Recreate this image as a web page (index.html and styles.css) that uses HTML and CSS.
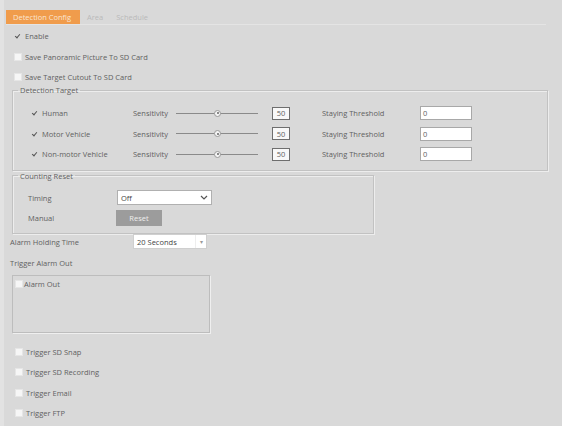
FILE: index.html
```html
<!DOCTYPE html>
<html>
<head>
<meta charset="utf-8">
<link rel="stylesheet" href="styles.css">
</head>
<body>
<div class="page">
  <div class="tabs">
    <span class="tab active">Detection Config</span>
    <span class="tab">Area</span>
    <span class="tab">Schedule</span>
  </div>

  <div class="toprows">
    <div class="row top"><span class="cb checked"></span><span>Enable</span></div>
    <div class="row top"><span class="cb"></span><span>Save Panoramic Picture To SD Card</span></div>
    <div class="row top"><span class="cb"></span><span>Save Target Cutout To SD Card</span></div>
  </div>

  <fieldset class="group target">
    <legend>Detection Target</legend>
    <div class="trow">
      <div class="tname"><span class="cb checked"></span><span>Human</span></div>
      <span class="slabel">Sensitivity</span>
      <span class="slider"><span class="thumb"></span></span>
      <span class="num">50</span>
      <span class="stlabel">Staying Threshold</span>
      <span class="tinput">0</span>
    </div>
    <div class="trow">
      <div class="tname"><span class="cb checked"></span><span>Motor Vehicle</span></div>
      <span class="slabel">Sensitivity</span>
      <span class="slider"><span class="thumb"></span></span>
      <span class="num">50</span>
      <span class="stlabel">Staying Threshold</span>
      <span class="tinput">0</span>
    </div>
    <div class="trow">
      <div class="tname"><span class="cb checked"></span><span>Non-motor Vehicle</span></div>
      <span class="slabel">Sensitivity</span>
      <span class="slider"><span class="thumb"></span></span>
      <span class="num">50</span>
      <span class="stlabel">Staying Threshold</span>
      <span class="tinput">0</span>
    </div>
  </fieldset>

  <fieldset class="group reset">
    <legend>Counting Reset</legend>
    <div class="crow">
      <span class="clabel">Timing</span>
      <span class="select">Off<svg class="chev" width="8" height="5" viewBox="0 0 8 5"><path d="M1 1 L4 4 L7 1" fill="none" stroke="#555" stroke-width="1.2"/></svg></span>
    </div>
    <div class="crow">
      <span class="clabel">Manual</span>
      <span class="btn">Reset</span>
    </div>
  </fieldset>

  <div class="row hold">
    <span class="hlabel">Alarm Holding Time</span>
    <span class="select2"><span class="sval">20 Seconds</span><span class="sarrow">&#9662;</span></span>
  </div>
  <div class="row plain">Trigger Alarm Out</div>
  <div class="alarmbox">
    <div class="arow"><span class="cb"></span><span>Alarm Out</span></div>
  </div>

  <div class="triggers">
    <div class="row trig"><span class="cb"></span><span>Trigger SD Snap</span></div>
    <div class="row trig"><span class="cb"></span><span>Trigger SD Recording</span></div>
    <div class="row trig"><span class="cb"></span><span>Trigger Email</span></div>
    <div class="row trig"><span class="cb"></span><span>Trigger FTP</span></div>
  </div>
</div>
</body>
</html>
```

FILE: styles.css
```css
html, body {
  margin: 0;
  padding: 0;
  background: #d9d9d9;
}
body {
  font-family: "Open Sans", "Noto Sans", sans-serif;
  font-size: 7.5px;
  color: #616161;
  width: 562px;
  height: 426px;
  overflow: hidden;
}
.page {
  padding: 10px 0 0 0;
  border-left: 4px solid #e2e2e2;
  min-height: 426px;
  box-sizing: border-box;
  background: #d9d9d9;
}
.tabs {
  display: flex;
  align-items: stretch;
  height: 14px;
  margin-left: 2px;
  border-bottom: 1px solid #e4e4e4;
  width: 540px;
}
.tab {
  display: flex;
  align-items: center;
  padding: 0 7px 0 6px;
  color: #b9b9b9;
}
.tab.active {
  background: #f09c4c;
  color: #fbe6d2;
  width: 74px;
  box-sizing: border-box;
  padding-left: 7px;
  margin-right: 1px;
}
.row {
  display: flex;
  align-items: center;
  height: 20px;
}
.toprows {
  margin-top: 1px;
}
.row.top {
  padding-left: 10px;
  gap: 3px;
  height: 20.5px;
}
.cb {
  display: inline-block;
  width: 6px;
  height: 6px;
  background: #f6f6f6;
  border: 1px solid #e6e6e6;
  position: relative;
  flex: none;
}
.cb.checked {
  background: transparent;
  border-color: transparent;
}
.cb.checked::after {
  content: "";
  position: absolute;
  left: 1px;
  top: 0px;
  width: 2px;
  height: 4px;
  border: solid #555;
  border-width: 0 1.2px 1.2px 0;
  transform: rotate(40deg);
}
.group {
  border: 1px solid #c2c2c2;
  box-shadow: inset 1px 1px 0 #ededed, 1px 1px 0 #ededed;
  margin: 0;
  padding: 0;
  min-width: 0;
}
.group legend {
  padding: 0 2px;
  margin-left: 5px;
  color: #616161;
}
.target {
  margin-left: 8px;
  width: 536px;
  box-sizing: border-box;
  padding: 8px 0 5px 0;
  margin-top: -2.5px;
}
.trow {
  display: flex;
  align-items: center;
  height: 20.5px;
}
.tname {
  display: flex;
  align-items: center;
  gap: 3px;
  width: 102px;
  padding-left: 18px;
  box-sizing: content-box;
}
.slabel {
  width: 43px;
  flex: none;
}
.slider {
  width: 82px;
  height: 1px;
  background: #8a8a8a;
  position: relative;
  flex: none;
}
.thumb {
  position: absolute;
  left: 38px;
  top: -3px;
  width: 5px;
  height: 5px;
  border-radius: 50%;
  background: #f4f4f4;
  border: 1px solid #9a9a9a;
  box-sizing: content-box;
}
.thumb::after {
  content: "";
  position: absolute;
  left: 1.5px;
  top: 1.5px;
  width: 2px;
  height: 2px;
  border-radius: 50%;
  background: #666;
}
.num {
  margin-left: 14px;
  width: 18px;
  height: 13px;
  box-sizing: border-box;
  border: 1px solid #6e6e6e;
  background: #f8f8f8;
  display: flex;
  align-items: center;
  justify-content: center;
  flex: none;
}
.stlabel {
  margin-left: 32px;
  width: 98px;
  flex: none;
}
.tinput {
  width: 52px;
  height: 14px;
  box-sizing: border-box;
  border: 1px solid #a8a8a8;
  background: #ffffff;
  display: flex;
  align-items: center;
  padding-left: 2px;
  flex: none;
}
.reset {
  margin-left: 8px;
  width: 362px;
  box-sizing: border-box;
  padding: 7px 0 5px 0;
}
.crow {
  display: flex;
  align-items: center;
  height: 20px;
}
.clabel {
  width: 89px;
  padding-left: 15px;
  flex: none;
}
.select {
  width: 95px;
  height: 15px;
  box-sizing: border-box;
  border: 1px solid #b0b0b0;
  background: #fff;
  display: flex;
  align-items: center;
  justify-content: space-between;
  padding: 0 3px 0 3px;
  color: #444;
}
.btn {
  width: 46px;
  height: 16px;
  background: #9c9c9c;
  color: #eeeeee;
  display: flex;
  align-items: center;
  justify-content: center;
  margin-left: -1px;
}
.row.hold {
  margin-top: -2px;
  padding-left: 6px;
}
.hlabel {
  width: 123px;
  flex: none;
}
.select2 {
  width: 74px;
  height: 15px;
  box-sizing: border-box;
  border: 1px solid #cfcfcf;
  background: #fff;
  display: flex;
  align-items: center;
  color: #444;
}
.sval {
  flex: 1;
  padding-left: 3px;
}
.sarrow {
  width: 10px;
  font-size: 6px;
  color: #999;
  text-align: center;
  border-left: 1px solid #eee;
  height: 100%;
  display: flex;
  align-items: center;
  justify-content: center;
}
.row.plain {
  padding-left: 6px;
  height: 23px;
}
.alarmbox {
  margin-left: 8px;
  width: 198px;
  height: 58px;
  box-sizing: border-box;
  border: 1px solid #bdbdbd;
  box-shadow: 1px 1px 0 #efefef;
  padding: 4px 0 0 2px;
}
.arow {
  display: flex;
  align-items: center;
  gap: 1px;
  height: 8px;
}
.triggers {
  margin-top: 9px;
}
.row.trig {
  padding-left: 11px;
  gap: 3px;
  height: 20.5px;
}
```
